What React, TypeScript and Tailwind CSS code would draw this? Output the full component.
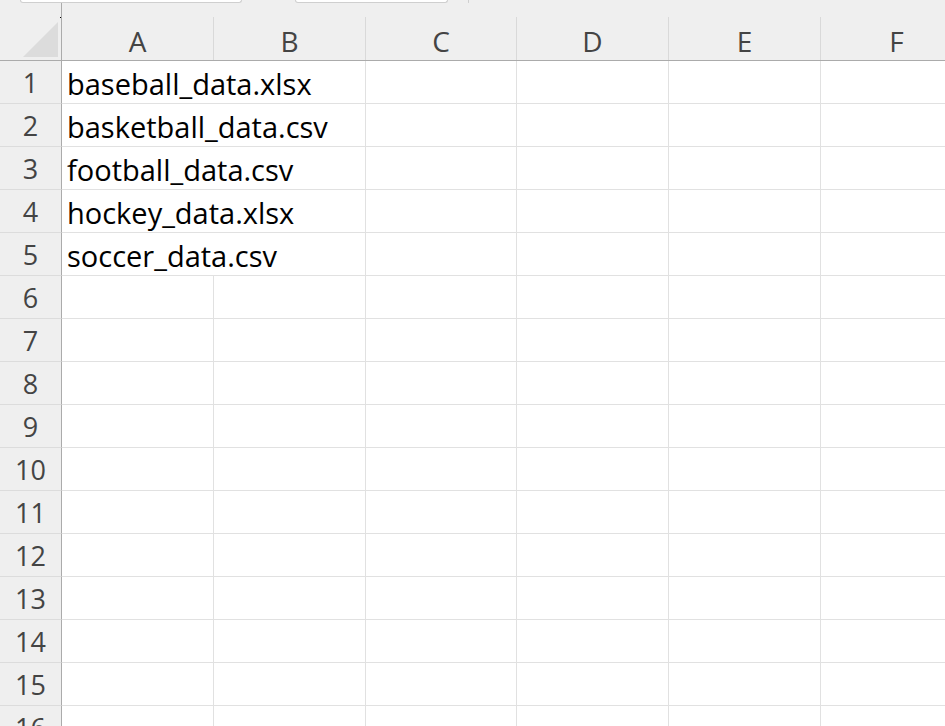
import React from "react";

const columns = ["A", "B", "C", "D", "E", "F"];

const files: Record<number, string> = {
  1: "baseball_data.xlsx",
  2: "basketball_data.csv",
  3: "football_data.csv",
  4: "hockey_data.xlsx",
  5: "soccer_data.csv",
};

const rows = Array.from({ length: 16 }, (_, i) => i + 1);

function TopStrip() {
  // bottoms of the ribbon boxes peeking in above the sheet
  return (
    <div className="flex h-[3px] items-start">
      <div className="ml-[20px] h-[3px] w-[222px] rounded-b-[3px] border-b border-x border-[#cfcfcf] bg-white" />
      <div className="ml-[53px] h-[3px] w-[153px] rounded-b-[3px] border-b border-x border-[#cfcfcf] bg-white" />
      <div className="ml-[20px] h-[3px] flex-1 rounded-bl-[3px] border-b border-l border-[#cfcfcf] bg-white" />
    </div>
  );
}

function ColumnHeader() {
  return (
    <div className="relative flex h-[61px] border-b border-[#ababab] bg-[#efefef]">
      <TopStrip />
      <div className="absolute left-0 top-[3px] flex h-[57px] w-full">
        {/* select-all corner */}
        <div className="relative h-full w-[62px] shrink-0 border-r border-[#ababab]">
          <div className="absolute left-[60px] top-[14px] h-px w-px bg-black" />
          <svg className="absolute left-[23px] top-[19px]" width="35" height="35" viewBox="0 0 35 35">
            <polygon points="35,0 35,35 0,35" fill="#dcdcdc" />
          </svg>
        </div>
        {columns.map((c, i) => (
          <div key={c} className={"flex h-full shrink-0 flex-col " + (i === 2 ? "w-[151px]" : "w-[152px]")}>
            <div className="h-[14px]" />
            <div className="flex flex-1 items-end justify-center border-r border-[#d9d9d9] pb-[5px] text-[28px] leading-none text-[#444]">
              <span>{c}</span>
            </div>
          </div>
        ))}
      </div>
    </div>
  );
}

function Row({ n }: { n: number }) {
  const text = files[n];
  return (
    <div className="flex h-[43px] shrink-0">
      <div className="flex w-[62px] shrink-0 items-center justify-center border-b border-r border-b-[#dcdcdc] border-r-[#ababab] bg-[#efefef] pt-[2px] text-[27px] text-[#444]">
        {n}
      </div>
      {columns.map((c, i) => (
        <div
          key={c}
          className={
            "relative flex shrink-0 items-center border-b border-[#e1e1e1] " +
            (i === 2 ? "w-[151px] " : "w-[152px] ") +
            (i === 0 && text ? "" : "border-r")
          }
        >
          {i === 0 && text && (
            <span className="absolute left-[5px] top-[1px] z-10 whitespace-nowrap text-[29px] text-black">
              {text}
            </span>
          )}
        </div>
      ))}
    </div>
  );
}

export default function App() {
  return (
    <div
      className="h-[726px] w-[945px] overflow-hidden bg-white"
      style={{ fontFamily: '"Open Sans", "Noto Sans", sans-serif' }}
    >
      <ColumnHeader />
      {rows.map((n) => (
        <Row key={n} n={n} />
      ))}
    </div>
  );
}
